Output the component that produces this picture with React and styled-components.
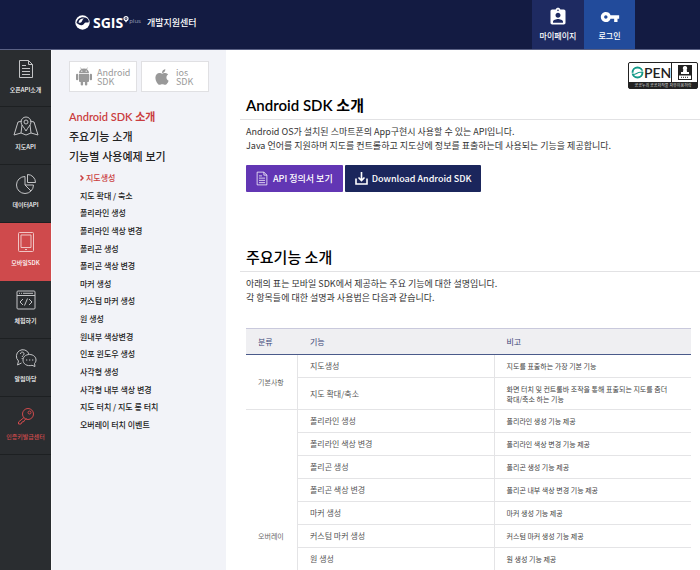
import React from "react";
import styled, { createGlobalStyle } from "styled-components";
import { MdAssignmentInd, MdVpnKey } from "react-icons/md";
import { FaApple } from "react-icons/fa";

const GlobalStyle = createGlobalStyle`
  * { box-sizing: border-box; }
  body {
    margin: 0;
    background: #fff;
    color: #222;
    font-family: "Noto Sans CJK KR", sans-serif;
  }
  h1, h2, p, ul { margin: 0; padding: 0; }
  ul { list-style: none; }
  a { color: inherit; text-decoration: none; }
  svg { display: block; flex: none; }
`;

const Page = styled.div`
  display: flex;
  flex-direction: column;
  min-height: 100vh;
`;

const Header = styled.header`
  display: flex;
  justify-content: space-between;
  height: 50px;
  padding: 0 65px 0 75px;
  background: #131b42;
  border-bottom: 1px solid #5a6184;
  color: #fff;
`;

const Brand = styled.a`
  display: flex;
  align-items: center;
  padding-bottom: 4px;
`;

const BrandName = styled.span`
  margin-left: 3px;
  font-family: "Open Sans", sans-serif;
  font-size: 14px;
  font-weight: 700;
  line-height: 16px;
`;

const BrandPlus = styled.span`
  display: flex;
  align-items: flex-start;
  height: 14px;
  color: #9aa0bd;
  font-family: "Open Sans", sans-serif;
  font-size: 6px;
  line-height: 11px;
`;

const BrandTitle = styled.h1`
  margin-left: 6px;
  font-size: 9px;
  font-weight: 500;
  line-height: 14px;
`;

const HeaderNav = styled.nav`
  display: flex;
`;

const HeaderLink = styled.a`
  display: flex;
  flex-direction: column;
  align-items: center;
  gap: 3px;
  width: ${(p) => (p.$active ? 51 : 52)}px;
  padding-top: 7px;
  background: ${(p) => (p.$active ? "#224b9b" : "#1e2a61")};
  font-size: 8px;
  font-weight: 500;
  line-height: 12px;
`;

const Body = styled.div`
  display: flex;
  flex: 1;
`;

const Rail = styled.nav`
  flex: none;
  width: 52px;
  background: #2a2d30;
  border-right: 1px solid #fafafc;
`;

const RailLink = styled.a`
  display: flex;
  flex-direction: column;
  align-items: center;
  gap: 6px;
  height: ${(p) => (p.$first ? 57 : 58)}px;
  padding-top: 9px;
  background: ${(p) => (p.$active ? "#cf4a4c" : "transparent")};
  border-bottom: 1px solid ${(p) => (p.$active ? "#cf4a4c" : "#1d2022")};
  color: ${(p) => (p.$accent ? "#cf4a4c" : "#fff")};
  font-size: 6px;
  font-weight: 500;
  line-height: 10px;
  white-space: nowrap;

  svg {
    color: ${(p) => (p.$accent ? "#cf4a4c" : p.$active ? "#f0c4c4" : "#c3c4c6")};
  }
`;

const SideMenu = styled.aside`
  flex: none;
  width: 174px;
  padding: 11px 17px;
  background: #f2f3f8;
`;

const SdkTabs = styled.div`
  display: grid;
  grid-template-columns: 1fr 1fr;
  gap: 4px;
  margin-bottom: 15px;
`;

const SdkTab = styled.button`
  display: flex;
  align-items: center;
  gap: 5px;
  height: 31px;
  padding: 0 0 0 ${(p) => (p.$narrow ? 11 : 6)}px;
  background: #fff;
  border: 1px solid #e0e0e3;
  color: #999;
  font-family: inherit;
  font-size: 9px;
  line-height: 9px;
  text-align: left;
`;

const MainMenuItem = styled.li`
  color: ${(p) => (p.$active ? "#ca3d40" : "#222")};
  font-family: Lato, "Noto Sans CJK KR", sans-serif;
  font-size: 11px;
  font-weight: ${(p) => (p.$active ? 600 : 500)};
  line-height: 20px;
`;

const SubMenu = styled.ul`
  display: flex;
  flex-direction: column;
  justify-content: space-between;
  min-height: 263px;
  margin-top: 3px;
  padding-left: 11px;
`;

const SubMenuItem = styled.li`
  font-size: 8px;
  font-weight: 500;
  line-height: 16px;
  color: ${(p) => (p.$active ? "#ca3d40" : "#222")};

  a {
    display: flex;
    align-items: center;
    gap: 2px;
  }
`;

const Main = styled.main`
  flex: 1;
  min-width: 0;
  padding-left: 14px;
`;

const BadgeRow = styled.div`
  display: flex;
  justify-content: flex-end;
  padding: 12px 2px 0 0;
`;

const OpenBadge = styled.a`
  display: block;
  width: 70px;
  background: #222;
  border: 1px solid #222;
  border-radius: 2px;
  overflow: hidden;
`;

const BadgeTop = styled.span`
  display: flex;
  align-items: center;
  height: 19px;
  padding-left: 2px;
  background: #fff;
  color: #222;
  font-family: Lato, sans-serif;
  font-size: 14px;
  font-weight: 600;
  line-height: 19px;
`;

const BadgeMark = styled.span`
  display: flex;
  flex: 1;
  align-items: center;
  justify-content: center;
  height: 19px;
  border-left: 1px solid #222;
`;

const BadgeCaption = styled.span`
  display: block;
  color: #ddd;
  font-size: 4px;
  line-height: 6px;
  text-align: center;
  white-space: nowrap;
`;

const Heading = styled.h2`
  padding: 0 6px 2px;
  border-bottom: 1px solid #e2e2e4;
  color: #000;
  font-family: ${(p) => (p.$latin ? 'Lato, "Noto Sans CJK KR"' : '"Noto Sans CJK KR"')}, sans-serif;
  font-size: 15px;
  font-weight: ${(p) => (p.$latin ? 600 : 500)};
  line-height: 24px;
`;

const Section = styled.section`
  margin-top: ${(p) => p.$gap}px;
`;

const Intro = styled.p`
  padding: 5px 6px 0;
  color: #333;
  font-size: 9px;
  line-height: 14px;
`;

const Actions = styled.div`
  display: flex;
  gap: 2px;
  padding: 12px 6px 0;
`;

const ActionLink = styled.a`
  display: flex;
  align-items: center;
  gap: ${(p) => (p.$primary ? 5 : 4)}px;
  height: 27px;
  padding: 0 ${(p) => (p.$primary ? 10 : 9)}px 0 10px;
  background: ${(p) => (p.$primary ? "#6236b4" : "#1b265c")};
  border-radius: 1px;
  color: #fff;
  font-size: 9px;
  font-weight: 500;
  line-height: 14px;
  white-space: nowrap;
`;

const TableWrap = styled.div`
  padding: 23px 9px 0 6px;
`;

const Table = styled.table`
  width: 100%;
  border-collapse: separate;
  border-spacing: 0;
  table-layout: fixed;
  border-top: 1px solid #c9c9dc;
  font-size: 8px;
  line-height: 10px;
`;

const GroupCol = styled.col`
  width: 52px;
`;

const HeadCell = styled.th`
  height: 26px;
  padding: 0 11px 0 12px;
  background: #efeff2;
  border-bottom: 1px solid #4a5a8a;
  color: #3b4678;
  font-weight: 400;
  text-align: left;
`;

const GroupCell = styled.th`
  padding: ${(p) => (p.$tall ? "0 0 29px 12px" : "0 0 0 12px")};
  border-right: 1px solid #e4e4e6;
  border-bottom: 1px solid #e4e4e6;
  color: #666;
  font-size: 7px;
  font-weight: 400;
  text-align: left;
  vertical-align: ${(p) => (p.$tall ? "bottom" : "middle")};
`;

const Cell = styled.td`
  height: 23px;
  padding: 0 12px;
  border-bottom: 1px solid #e4e4e6;
  border-right: 1px solid #e4e4e6;
  color: #555;
`;

const NoteCell = styled.td`
  height: ${(p) => (p.$loose ? 32 : 23)}px;
  padding: 0 20px 0 12px;
  border-bottom: 1px solid #e4e4e6;
  color: #444;
  font-size: 7px;
`;

const Line = ({ width, height, viewBox, children, stroke = 1 }) => (
  <svg
    width={width}
    height={height}
    viewBox={viewBox || `0 0 ${width} ${height}`}
    fill="none"
    stroke="currentColor"
    strokeWidth={stroke}
    aria-hidden="true"
  >
    {children}
  </svg>
);

const DocumentIcon = ({ width = 16, height = 20 }) => (
  <Line width={width} height={height} viewBox="0 0 16 20">
    <path d="M1.5 1.5h9l4 4v13h-13zM10.500 1.500v4h4M4 6.500h4M4 9.500h8M4 12.500h8M4 15.500h8" />
  </Line>
);

const MapIcon = () => (
  <Line width={26} height={20}>
    <path d="M9 5 5 6 1 19l7-2 5 2 5-2 7 2-4-13-4-1M8 17l1-8M18 17l-1-8M13 15c-2-4-5-6-5-9a5 5 0 0 1 10 0c0 3-3 5-5 9z" />
    <circle cx="13" cy="6" r="2" />
  </Line>
);

const PieIcon = () => (
  <Line width={20} height={20}>
    <path d="M9 2.500a8.500 8.500 0 1 0 8.500 8.500H9zM11.500.5a8 8 0 0 1 8 8h-8zM9 11l6 6" />
  </Line>
);

const TabletIcon = () => (
  <Line width={16} height={20}>
    <rect x=".5" y=".5" width="15" height="19" rx="1" />
    <path d="M3 3h10v12.500H3zM7 17.500h2" />
  </Line>
);

const CodeIcon = () => (
  <Line width={20} height={20}>
    <rect x="1" y="1" width="18" height="18" rx="1" />
    <path d="M1 5.500h18M3 3.300h1M5 3.300h1M7 3.300h10M7 9l-3 3 3 3M13 9l3 3-3 3M11.500 8.500l-3 7" />
  </Line>
);

const TalkIcon = () => (
  <Line width={22} height={20}>
    <path d="M6.500 15 2.500 17l1-4A6.500 6.500 0 1 1 14 6" />
    <path d="M14.500 6.500c4 0 6.500 2.500 6.500 5.500 0 1.500-.6 2.500-1.500 3.500l.5 3-3-1.200c-5 1.300-9-1.300-9-5.300 0-3 2.500-5.500 6.500-5.500z" />
    <path d="M5.500 6c0-3 4-2 3.500 0 0 1.500-1.800 1.500-1.800 3M7.200 10v1M11 12h1.300M14 12h1.300M17 12h1.300" />
  </Line>
);

const KeyIcon = () => (
  <Line width={18} height={20}>
    <circle cx="11" cy="8" r="5.500" />
    <circle cx="12.500" cy="6.500" r="1.500" />
    <path d="M7 11.500 1.500 16v2H4l1-2 2-.5.500-1.500 2-1.500" />
  </Line>
);

const DownloadIcon = () => (
  <Line width={13} height={13} stroke={1.6}>
    <path d="M1 6.500V12h11V6.500M6.500 0v8M3.500 5.500l3 3 3-3" />
  </Line>
);

const AndroidIcon = () => (
  <svg width="16" height="19" viewBox="0 0 16 19" fill="currentColor" aria-hidden="true">
    <path d="M3 6a5 4.500 0 0 1 10 0zM3 6.800h10v7.200a1 1 0 0 1-1 1H4a1 1 0 0 1-1-1z" />
    <rect x="0" y="6.800" width="2.300" height="6.500" rx="1.100" />
    <rect x="13.700" y="6.800" width="2.300" height="6.500" rx="1.100" />
    <rect x="4.700" y="12" width="2.400" height="6.500" rx="1.100" />
    <rect x="8.900" y="12" width="2.400" height="6.500" rx="1.100" />
    <path d="M4.500.6 6 3M11.500.6 10 3" stroke="currentColor" strokeWidth=".7" />
    <circle cx="5.800" cy="4.200" r=".6" fill="#fff" />
    <circle cx="10.200" cy="4.200" r=".6" fill="#fff" />
  </svg>
);

const EmblemIcon = () => (
  <svg width="15" height="15" viewBox="0 0 15 15" aria-hidden="true">
    <circle cx="7.500" cy="7.500" r="7.200" fill="#fff" />
    <path
      d="M1.500 8C2 3.500 6.500 1 11 2.800c2 .8 3 2.500 2.800 4.200-.8 1-2.300.2-3.300.5-1.500.4-1.500 2.500-3.800 2.800C4.500 10.500 3.500 9 1.500 8z"
      fill="#131b42"
    />
    <path d="M3.500 7.500C4 4.500 6.500 3.200 9 3.600 6.800 4.800 7.500 7 5.800 7.600c-.9.300-1.600.3-2.300-.1z" fill="#fff" />
  </svg>
);

const PinIcon = () => (
  <svg width="6" height="7" viewBox="0 0 6 7" aria-hidden="true">
    <circle cx="3" cy="2.600" r="2" fill="none" stroke="#fff" strokeWidth="1.200" />
    <path d="M1.800 4.500h2.400L3 6.800z" fill="#fff" />
    <circle cx="3" cy="2.600" r=".6" fill="#fff" />
  </svg>
);

const ChevronIcon = () => (
  <Line width={4} height={6} stroke={1.5}>
    <path d="M.5.5 3 3 .5 5.500" />
  </Line>
);

const OpenRingIcon = () => (
  <svg width="13" height="13" viewBox="0 0 12 12" aria-hidden="true">
    <circle cx="6" cy="6" r="4.600" fill="none" stroke="#159b8a" strokeWidth="1.800" />
    <path d="M0 6.500C4 7.500 5.500 4 12 4.800" fill="none" stroke="#fff" strokeWidth=".8" />
    <path d="M2 7.800C5 8 6 5 10 6" fill="none" stroke="#159b8a" />
  </svg>
);

const StampIcon = () => (
  <svg width="16" height="15" viewBox="0 0 16 15" aria-hidden="true">
    <path d="M1 0h14v15H1z" fill="#222" />
    <path d="M8 1a2.200 2.200 0 0 1 1.700 3.600L10 7h2v2H4V7h2l.3-2.400A2.200 2.200 0 0 1 8 1zM2 10.500h12V14H2z" fill="#fff" />
    <path d="M4 12.300h8" stroke="#222" strokeDasharray="1 1" />
  </svg>
);

const railItems = [
  { label: "오픈API소개", Icon: DocumentIcon },
  { label: "지도API", Icon: MapIcon },
  { label: "데이터API", Icon: PieIcon },
  { label: "모바일SDK", Icon: TabletIcon, active: true },
  { label: "체험하기", Icon: CodeIcon },
  { label: "알림마당", Icon: TalkIcon },
  { label: "인증키발급센터", Icon: KeyIcon, accent: true },
];

const subItems = [
  "지도생성",
  "지도 확대 / 축소",
  "폴리라인 생성",
  "폴리라인 색상 변경",
  "폴리곤 생성",
  "폴리곤 색상 변경",
  "마커 생성",
  "커스텀 마커 생성",
  "원 생성",
  "원내부 색상변경",
  "인포 윈도우 생성",
  "사각형 생성",
  "사각형 내부 색상 변경",
  "지도 터치 / 지도 롱 터치",
  "오버레이 터치 이벤트",
];

const groups = [
  {
    name: "기본사항",
    rows: [
      ["지도생성", "지도를 표출하는 가장 기본 기능"],
      ["지도 확대/축소", "화면 터치 및 컨트롤바 조작을 통해 표출되는 지도를 줌더 확대/축소 하는 기능"],
    ],
  },
  {
    name: "오버레이",
    tall: true,
    rows: [
      ["폴리라인 생성", "폴리라인 생성 기능 제공"],
      ["폴리라인 색상 변경", "폴리라인 색상 변경 기능 제공"],
      ["폴리곤 생성", "폴리곤 생성 기능 제공"],
      ["폴리곤 색상 변경", "폴리곤 내부 색상 변경 기능 제공"],
      ["마커 생성", "마커 생성 기능 제공"],
      ["커스텀 마커 생성", "커스텀 마커 생성 기능 제공"],
      ["원 생성", "원 생성 기능 제공"],
    ],
  },
];

export default function App() {
  return (
    <Page>
      <GlobalStyle />
      <Header>
        <Brand href="#home">
          <EmblemIcon />
          <BrandName>SGIS</BrandName>
          <BrandPlus>
            <PinIcon />
            plus
          </BrandPlus>
          <BrandTitle>개발지원센터</BrandTitle>
        </Brand>
        <HeaderNav>
          <HeaderLink href="#mypage">
            <MdAssignmentInd size={20} />
            마이페이지
          </HeaderLink>
          <HeaderLink href="#login" $active>
            <MdVpnKey size={20} />
            로그인
          </HeaderLink>
        </HeaderNav>
      </Header>
      <Body>
        <Rail>
          {railItems.map(({ label, Icon, active, accent }, i) => (
            <RailLink key={label} href="#section" $first={i === 0} $active={active} $accent={accent}>
              <Icon />
              {label}
            </RailLink>
          ))}
        </Rail>
        <SideMenu>
          <SdkTabs>
            <SdkTab type="button">
              <AndroidIcon />
              <span>
                Android
                <br />
                SDK
              </span>
            </SdkTab>
            <SdkTab type="button" $narrow>
              <FaApple size={18} />
              <span>
                ios
                <br />
                SDK
              </span>
            </SdkTab>
          </SdkTabs>
          <ul>
            <MainMenuItem $active>
              <a href="#intro">Android SDK 소개</a>
            </MainMenuItem>
            <MainMenuItem>
              <a href="#features">주요기능 소개</a>
            </MainMenuItem>
            <MainMenuItem>
              <a href="#examples">기능별 사용예제 보기</a>
            </MainMenuItem>
          </ul>
          <SubMenu>
            {subItems.map((label, i) => (
              <SubMenuItem key={label} $active={i === 0}>
                <a href="#example">
                  {i === 0 && <ChevronIcon />}
                  {label}
                </a>
              </SubMenuItem>
            ))}
          </SubMenu>
        </SideMenu>
        <Main>
          <BadgeRow>
            <OpenBadge href="#license">
              <BadgeTop>
                <OpenRingIcon />
                PEN
                <BadgeMark>
                  <StampIcon />
                </BadgeMark>
              </BadgeTop>
              <BadgeCaption>공공누리 공공저작물 자유이용허락</BadgeCaption>
            </OpenBadge>
          </BadgeRow>
          <Section id="intro" $gap={4}>
            <Heading $latin>Android SDK 소개</Heading>
            <Intro>
              Android OS가 설치된 스마트폰의 App구현시 사용할 수 있는 API입니다.
              <br />
              Java 언어를 지원하며 지도를 컨트롤하고 지도상에 정보를 표출하는데 사용되는 기능을 제공합니다.
            </Intro>
            <Actions>
              <ActionLink href="#api" $primary>
                <DocumentIcon width={12} height={15} />
                API 정의서 보기
              </ActionLink>
              <ActionLink href="#download">
                <DownloadIcon />
                Download Android SDK
              </ActionLink>
            </Actions>
          </Section>
          <Section id="features" $gap={53}>
            <Heading>주요기능 소개</Heading>
            <Intro>
              아래의 표는 모바일 SDK에서 제공하는 주요 기능에 대한 설명입니다.
              <br />각 항목들에 대한 설명과 사용법은 다음과 같습니다.
            </Intro>
            <TableWrap>
              <Table>
                <colgroup>
                  <GroupCol />
                  <col />
                  <col />
                </colgroup>
                <thead>
                  <tr>
                    <HeadCell scope="col">분류</HeadCell>
                    <HeadCell scope="col">기능</HeadCell>
                    <HeadCell scope="col">비고</HeadCell>
                  </tr>
                </thead>
                <tbody>
                  {groups.map(({ name, rows, tall }) =>
                    rows.map(([feature, note], i) => (
                      <tr key={feature}>
                        {i === 0 && (
                          <GroupCell scope="rowgroup" rowSpan={rows.length} $tall={tall}>
                            {name}
                          </GroupCell>
                        )}
                        <Cell>{feature}</Cell>
                        <NoteCell $loose={note.length > 30}>{note}</NoteCell>
                      </tr>
                    ))
                  )}
                </tbody>
              </Table>
            </TableWrap>
          </Section>
        </Main>
      </Body>
    </Page>
  );
}
